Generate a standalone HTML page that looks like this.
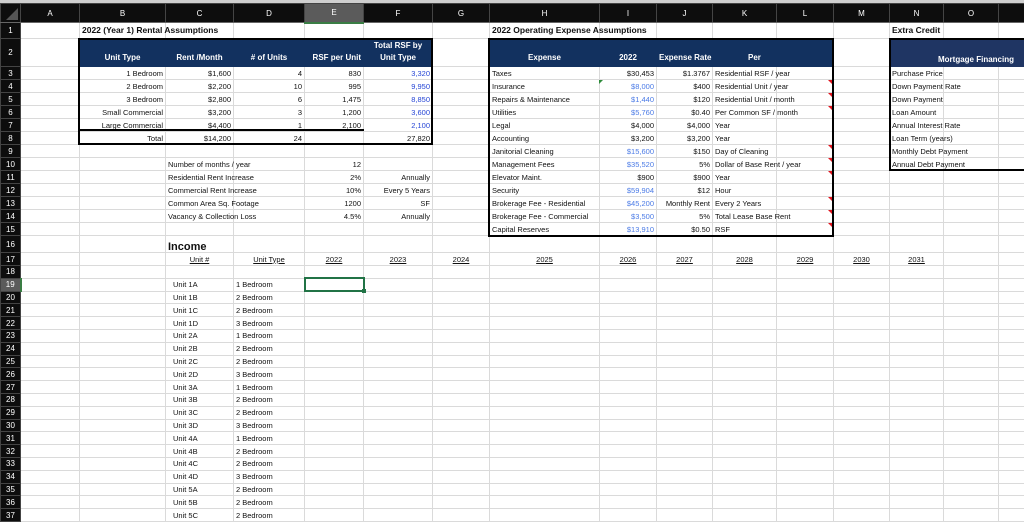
<!DOCTYPE html>
<html><head><meta charset="utf-8"><style>
*{margin:0;padding:0;box-sizing:border-box}
body{width:1024px;height:514px;overflow:hidden;background:#fff;font-family:"Liberation Sans",sans-serif;font-size:7.5px;color:#111;position:relative}
#top{position:absolute;left:0;top:0;width:1024px;height:3px;background:#cfcfcf}
table{position:absolute;left:0;top:3px;border-collapse:collapse;table-layout:fixed;width:1024px}
td{border:1px solid #dadada;white-space:nowrap;overflow:visible;padding:0 2px;vertical-align:middle;line-height:9px}
th{background:#0d0d0d;color:#fff;font-weight:normal;font-size:8px;border:1px solid #444;text-align:center}
tr.h th{height:19px;border-bottom:1px solid #666}
td.r{text-align:right}.c{text-align:center}
.b{font-weight:bold}.u{text-decoration:underline}
.bl{color:#2646d6}.lb{color:#4b7be6}
td.nv{background:#12315f;border-color:#12315f;color:#fff;font-weight:bold;font-size:8px;vertical-align:bottom;padding-bottom:2px;text-align:center;line-height:12px}
td.nv2{background:#1f3563;border-color:#1f3563}
.box{position:absolute;border:2px solid #000;pointer-events:none}
.tri{position:absolute;width:0;height:0;border-top:4px solid #e0141e;border-left:4px solid transparent}
</style></head><body>
<div id="top"></div>
<table>
<colgroup><col style="width:20px"><col style="width:59px"><col style="width:86px"><col style="width:68px"><col style="width:71px"><col style="width:59px"><col style="width:69px"><col style="width:57px"><col style="width:110px"><col style="width:57px"><col style="width:56px"><col style="width:64px"><col style="width:57px"><col style="width:56px"><col style="width:54px"><col style="width:55px"><col style="width:26px"></colgroup>
<tr class="h"><th style="position:relative"><span style="position:absolute;right:2px;bottom:2px;border-bottom:12px solid #555;border-left:12px solid transparent"></span></th><th>A</th><th>B</th><th>C</th><th>D</th><th style="background:#5b5b5b;border-bottom:2px solid #3a7d44">E</th><th>F</th><th>G</th><th>H</th><th>I</th><th>J</th><th>K</th><th>L</th><th>M</th><th>N</th><th>O</th><th></th></tr>
<tr style="height:16px"><th>1</th><td></td><td class="b" style="font-size:8.5px">2022 (Year 1) Rental Assumptions</td><td></td><td></td><td></td><td></td><td></td><td class="b" style="font-size:8.5px">2022 Operating Expense Assumptions</td><td></td><td></td><td></td><td></td><td></td><td class="b" style="font-size:8.5px">Extra Credit</td><td></td><td></td></tr>
<tr style="height:28px"><th>2</th><td></td><td class="nv">Unit Type</td><td class="nv">Rent /Month</td><td class="nv">#&nbsp;of Units</td><td class="nv" style="text-align:right">RSF per Unit</td><td class="nv">Total RSF by<br>Unit Type</td><td></td><td class="nv">Expense</td><td class="nv">2022</td><td class="nv">Expense Rate</td><td class="nv" style="text-align:left;padding-left:35px">Per</td><td class="nv"></td><td></td><td class="nv nv2"></td><td class="nv nv2"></td><td class="nv nv2"></td></tr>
<tr style="height:13px"><th>3</th><td></td><td class="r">1 Bedroom</td><td class="r">$1,600</td><td class="r">4</td><td class="r">830</td><td class="r bl">3,320</td><td></td><td>Taxes</td><td class="r">$30,453</td><td class="r">$1.3767</td><td>Residential RSF / year</td><td></td><td></td><td>Purchase Price</td><td></td><td></td></tr>
<tr style="height:13px"><th>4</th><td></td><td class="r">2 Bedroom</td><td class="r">$2,200</td><td class="r">10</td><td class="r">995</td><td class="r bl">9,950</td><td></td><td>Insurance</td><td class="r lb">$8,000</td><td class="r">$400</td><td>Residential Unit / year</td><td></td><td></td><td>Down Payment Rate</td><td></td><td></td></tr>
<tr style="height:13px"><th>5</th><td></td><td class="r">3 Bedroom</td><td class="r">$2,800</td><td class="r">6</td><td class="r">1,475</td><td class="r bl">8,850</td><td></td><td>Repairs &amp; Maintenance</td><td class="r lb">$1,440</td><td class="r">$120</td><td>Residential Unit / month</td><td></td><td></td><td>Down Payment</td><td></td><td></td></tr>
<tr style="height:13px"><th>6</th><td></td><td class="r">Small Commercial</td><td class="r">$3,200</td><td class="r">3</td><td class="r">1,200</td><td class="r bl">3,600</td><td></td><td>Utilities</td><td class="r lb">$5,760</td><td class="r">$0.40</td><td>Per Common SF / month</td><td></td><td></td><td>Loan Amount</td><td></td><td></td></tr>
<tr style="height:13px"><th>7</th><td></td><td class="r">Large Commercial</td><td class="r">$4,400</td><td class="r">1</td><td class="r">2,100</td><td class="r bl">2,100</td><td></td><td>Legal</td><td class="r">$4,000</td><td class="r">$4,000</td><td>Year</td><td></td><td></td><td>Annual Interest Rate</td><td></td><td></td></tr>
<tr style="height:13px"><th>8</th><td></td><td class="r">Total</td><td class="r">$14,200</td><td class="r">24</td><td></td><td class="r">27,820</td><td></td><td>Accounting</td><td class="r">$3,200</td><td class="r">$3,200</td><td>Year</td><td></td><td></td><td>Loan Term (years)</td><td></td><td></td></tr>
<tr style="height:13px"><th>9</th><td></td><td></td><td></td><td></td><td></td><td></td><td></td><td>Janitorial Cleaning</td><td class="r lb">$15,600</td><td class="r">$150</td><td>Day of Cleaning</td><td></td><td></td><td>Monthly Debt Payment</td><td></td><td></td></tr>
<tr style="height:13px"><th>10</th><td></td><td></td><td>Number of months / year</td><td></td><td class="r">12</td><td></td><td></td><td>Management Fees</td><td class="r lb">$35,520</td><td class="r">5%</td><td>Dollar of Base Rent / year</td><td></td><td></td><td>Annual Debt Payment</td><td></td><td></td></tr>
<tr style="height:13px"><th>11</th><td></td><td></td><td>Residential Rent Increase</td><td></td><td class="r">2%</td><td class="r">Annually</td><td></td><td>Elevator Maint.</td><td class="r">$900</td><td class="r">$900</td><td>Year</td><td></td><td></td><td></td><td></td><td></td></tr>
<tr style="height:13px"><th>12</th><td></td><td></td><td>Commercial Rent Increase</td><td></td><td class="r">10%</td><td class="r">Every 5 Years</td><td></td><td>Security</td><td class="r lb">$59,904</td><td class="r">$12</td><td>Hour</td><td></td><td></td><td></td><td></td><td></td></tr>
<tr style="height:13px"><th>13</th><td></td><td></td><td>Common Area Sq. Footage</td><td></td><td class="r">1200</td><td class="r">SF</td><td></td><td>Brokerage Fee - Residential</td><td class="r lb">$45,200</td><td class="r">Monthly Rent</td><td>Every 2 Years</td><td></td><td></td><td></td><td></td><td></td></tr>
<tr style="height:13px"><th>14</th><td></td><td></td><td>Vacancy &amp; Collection Loss</td><td></td><td class="r">4.5%</td><td class="r">Annually</td><td></td><td>Brokerage Fee - Commercial</td><td class="r lb">$3,500</td><td class="r">5%</td><td>Total Lease Base Rent</td><td></td><td></td><td></td><td></td><td></td></tr>
<tr style="height:13px"><th>15</th><td></td><td></td><td></td><td></td><td></td><td></td><td></td><td>Capital Reserves</td><td class="r lb">$13,910</td><td class="r">$0.50</td><td>RSF</td><td></td><td></td><td></td><td></td><td></td></tr>
<tr style="height:17px"><th>16</th><td></td><td></td><td class="b" style="font-size:11px;vertical-align:bottom">Income</td><td></td><td></td><td></td><td></td><td></td><td></td><td></td><td></td><td></td><td></td><td></td><td></td><td></td></tr>
<tr style="height:13px"><th>17</th><td></td><td></td><td class="c u">Unit #</td><td class="c u">Unit Type</td><td class="c u">2022</td><td class="c u">2023</td><td class="c u">2024</td><td class="c u">2025</td><td class="c u">2026</td><td class="c u">2027</td><td class="c u">2028</td><td class="c u">2029</td><td class="c u">2030</td><td class="c u">2031</td><td></td><td></td></tr>
<tr style="height:12.8px"><th>18</th><td></td><td></td><td></td><td></td><td></td><td></td><td></td><td></td><td></td><td></td><td></td><td></td><td></td><td></td><td></td><td></td></tr>
<tr style="height:12.8px"><th style="background:#5b5b5b;border-right:2px solid #3a7d44">19</th><td></td><td></td><td style="padding-left:7px">Unit 1A</td><td>1 Bedroom</td><td style="border:2px solid #217346;position:relative"><span style="position:absolute;right:-3px;bottom:-3px;width:4px;height:4px;background:#217346"></span></td><td></td><td></td><td></td><td></td><td></td><td></td><td></td><td></td><td></td><td></td><td></td></tr>
<tr style="height:12.8px"><th>20</th><td></td><td></td><td style="padding-left:7px">Unit 1B</td><td>2 Bedroom</td><td></td><td></td><td></td><td></td><td></td><td></td><td></td><td></td><td></td><td></td><td></td><td></td></tr>
<tr style="height:12.8px"><th>21</th><td></td><td></td><td style="padding-left:7px">Unit 1C</td><td>2 Bedroom</td><td></td><td></td><td></td><td></td><td></td><td></td><td></td><td></td><td></td><td></td><td></td><td></td></tr>
<tr style="height:12.8px"><th>22</th><td></td><td></td><td style="padding-left:7px">Unit 1D</td><td>3 Bedroom</td><td></td><td></td><td></td><td></td><td></td><td></td><td></td><td></td><td></td><td></td><td></td><td></td></tr>
<tr style="height:12.8px"><th>23</th><td></td><td></td><td style="padding-left:7px">Unit 2A</td><td>1 Bedroom</td><td></td><td></td><td></td><td></td><td></td><td></td><td></td><td></td><td></td><td></td><td></td><td></td></tr>
<tr style="height:12.8px"><th>24</th><td></td><td></td><td style="padding-left:7px">Unit 2B</td><td>2 Bedroom</td><td></td><td></td><td></td><td></td><td></td><td></td><td></td><td></td><td></td><td></td><td></td><td></td></tr>
<tr style="height:12.8px"><th>25</th><td></td><td></td><td style="padding-left:7px">Unit 2C</td><td>2 Bedroom</td><td></td><td></td><td></td><td></td><td></td><td></td><td></td><td></td><td></td><td></td><td></td><td></td></tr>
<tr style="height:12.8px"><th>26</th><td></td><td></td><td style="padding-left:7px">Unit 2D</td><td>3 Bedroom</td><td></td><td></td><td></td><td></td><td></td><td></td><td></td><td></td><td></td><td></td><td></td><td></td></tr>
<tr style="height:12.8px"><th>27</th><td></td><td></td><td style="padding-left:7px">Unit 3A</td><td>1 Bedroom</td><td></td><td></td><td></td><td></td><td></td><td></td><td></td><td></td><td></td><td></td><td></td><td></td></tr>
<tr style="height:12.8px"><th>28</th><td></td><td></td><td style="padding-left:7px">Unit 3B</td><td>2 Bedroom</td><td></td><td></td><td></td><td></td><td></td><td></td><td></td><td></td><td></td><td></td><td></td><td></td></tr>
<tr style="height:12.8px"><th>29</th><td></td><td></td><td style="padding-left:7px">Unit 3C</td><td>2 Bedroom</td><td></td><td></td><td></td><td></td><td></td><td></td><td></td><td></td><td></td><td></td><td></td><td></td></tr>
<tr style="height:12.8px"><th>30</th><td></td><td></td><td style="padding-left:7px">Unit 3D</td><td>3 Bedroom</td><td></td><td></td><td></td><td></td><td></td><td></td><td></td><td></td><td></td><td></td><td></td><td></td></tr>
<tr style="height:12.8px"><th>31</th><td></td><td></td><td style="padding-left:7px">Unit 4A</td><td>1 Bedroom</td><td></td><td></td><td></td><td></td><td></td><td></td><td></td><td></td><td></td><td></td><td></td><td></td></tr>
<tr style="height:12.8px"><th>32</th><td></td><td></td><td style="padding-left:7px">Unit 4B</td><td>2 Bedroom</td><td></td><td></td><td></td><td></td><td></td><td></td><td></td><td></td><td></td><td></td><td></td><td></td></tr>
<tr style="height:12.8px"><th>33</th><td></td><td></td><td style="padding-left:7px">Unit 4C</td><td>2 Bedroom</td><td></td><td></td><td></td><td></td><td></td><td></td><td></td><td></td><td></td><td></td><td></td><td></td></tr>
<tr style="height:12.8px"><th>34</th><td></td><td></td><td style="padding-left:7px">Unit 4D</td><td>3 Bedroom</td><td></td><td></td><td></td><td></td><td></td><td></td><td></td><td></td><td></td><td></td><td></td><td></td></tr>
<tr style="height:12.8px"><th>35</th><td></td><td></td><td style="padding-left:7px">Unit 5A</td><td>2 Bedroom</td><td></td><td></td><td></td><td></td><td></td><td></td><td></td><td></td><td></td><td></td><td></td><td></td></tr>
<tr style="height:12.8px"><th>36</th><td></td><td></td><td style="padding-left:7px">Unit 5B</td><td>2 Bedroom</td><td></td><td></td><td></td><td></td><td></td><td></td><td></td><td></td><td></td><td></td><td></td><td></td></tr>
<tr style="height:12.8px"><th>37</th><td></td><td></td><td style="padding-left:7px">Unit 5C</td><td>2 Bedroom</td><td></td><td></td><td></td><td></td><td></td><td></td><td></td><td></td><td></td><td></td><td></td><td></td></tr>
</table>
<div style="position:absolute;left:938px;top:55px;color:#fff;font-weight:bold;font-size:8px;white-space:nowrap">Mortgage Financing</div>
<div class="box" style="left:78px;top:38px;width:355px;height:107px"></div>
<div style="position:absolute;left:79px;top:129px;width:285px;height:2px;background:#000"></div>
<div class="box" style="left:488px;top:38px;width:346px;height:199px"></div>
<div class="box" style="left:889px;top:38px;width:140px;height:133px"></div>
<div style="position:absolute;left:599px;top:80px;border-top:4px solid #2e8b3a;border-right:4px solid transparent"></div>
<div class="tri" style="left:828px;top:80px"></div>
<div class="tri" style="left:828px;top:93px"></div>
<div class="tri" style="left:828px;top:106px"></div>
<div class="tri" style="left:828px;top:145px"></div>
<div class="tri" style="left:828px;top:158px"></div>
<div class="tri" style="left:828px;top:171px"></div>
<div class="tri" style="left:828px;top:197px"></div>
<div class="tri" style="left:828px;top:210px"></div>
<div class="tri" style="left:828px;top:223px"></div>
</body></html>
